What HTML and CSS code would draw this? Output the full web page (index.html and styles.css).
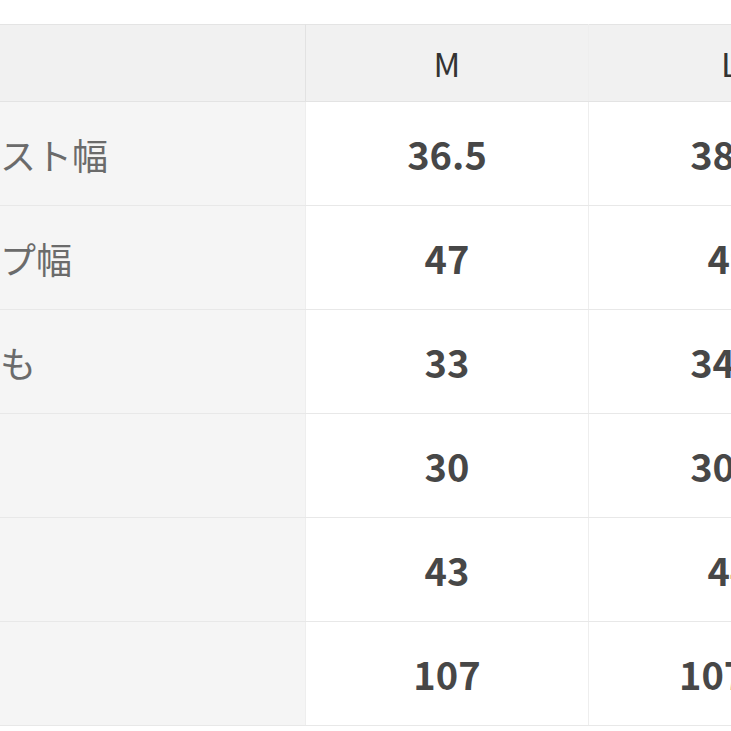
FILE: index.html
```html
<!DOCTYPE html>
<html lang="ja">
<head>
<meta charset="utf-8">
<link rel="stylesheet" href="styles.css">
</head>
<body>
<div class="frame">
  <table class="size-table">
    <thead>
      <tr><th class="corner"></th><th class="size">M</th><th class="size">L</th></tr>
    </thead>
    <tbody>
      <tr><th class="label">ウエスト幅</th><td>36.5</td><td>38.5</td></tr>
      <tr><th class="label">ヒップ幅</th><td>47</td><td>49</td></tr>
      <tr><th class="label">太もも</th><td>33</td><td>34.5</td></tr>
      <tr><th class="label">股上</th><td>30</td><td>30.5</td></tr>
      <tr><th class="label">股下</th><td>43</td><td>44</td></tr>
      <tr><th class="label">総丈</th><td>107</td><td>107.5</td></tr>
    </tbody>
  </table>
</div>
</body>
</html>
```

FILE: styles.css
```css
html, body {
  margin: 0;
  padding: 0;
  background: #ffffff;
  overflow: hidden;
}

.frame {
  width: 731px;
  height: 731px;
  overflow: hidden;
  padding-top: 24px;
  box-sizing: border-box;
}

.size-table {
  margin-left: -100px;
  border-collapse: collapse;
  table-layout: fixed;
  width: 969px;
  font-family: "Noto Sans CJK JP", "Noto Sans", sans-serif;
  border-top: 1px solid #e4e4e4;
}

.size-table th,
.size-table td {
  padding: 0;
  border-bottom: 1px solid #e8e8e8;
  border-right: 1px solid #eeeeee;
}

.size-table thead th {
  height: 76px;
  background: #f1f1f1;
  border-bottom: 1px solid #e3e3e3;
}

.corner {
  width: 405px;
}

.size {
  width: 282px;
  font-size: 33px;
  font-weight: 400;
  color: #333333;
  text-align: center;
}

.size-table thead th.corner {
  border-right: 1px solid #e2e2e2;
}

.label {
  height: 103px;
  background: #f5f5f5;
  border-right: 1px solid #e4e4e4;
  text-align: left;
  padding-left: 28px !important;
  font-size: 36px;
  font-weight: 400;
  color: #6b6b6b;
  white-space: nowrap;
}

.size-table td {
  text-align: center;
  font-size: 38px;
  font-weight: 700;
  color: #474747;
}
```
